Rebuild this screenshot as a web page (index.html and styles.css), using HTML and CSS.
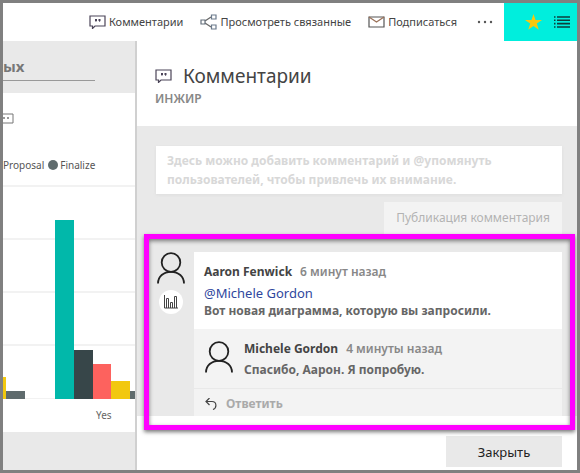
FILE: index.html
```html
<!DOCTYPE html>
<html lang="ru">
<head>
<meta charset="utf-8">
<title>Комментарии</title>
<link rel="stylesheet" href="styles.css">
</head>
<body>
<svg class="sprite" aria-hidden="true">
  <symbol id="speech" viewBox="0 0 17 14">
    <path d="M1 1h15v10H6l-2.500 2.500V11H1z" fill="none" stroke="currentColor" stroke-width="1.200"/>
    <path d="M6 4h2v2L6.500 7V6H6zM9.500 4h2v2L10 7V6h-.5z" fill="currentColor"/>
  </symbol>
  <symbol id="person" viewBox="0 0 28 32">
    <circle cx="14" cy="10.500" r="9.300" fill="none" stroke="currentColor" stroke-width="1.800"/>
    <path d="M1 31.500c0-7 5.500-11.700 13-11.700s13 4.700 13 11.700" fill="none" stroke="currentColor" stroke-width="1.800"/>
  </symbol>
</svg>
<header class="toolbar">
  <button class="tool" type="button"><svg class="speech-icon"><use href="#speech"/></svg>Комментарии</button>
  <button class="tool" type="button">
    <svg class="tool-icon" viewBox="0 0 17 16" fill="none" stroke="#666" stroke-width="1.200"><path d="M5 7l6-4M5 9l6 4"/><path d="M1 6h4v4H1z" stroke="#65707c"/><path d="M11.500 1H16v4h-4.500zM11.500 11H16v4h-4.500z" stroke="#6b7a8c"/></svg>Просмотреть связанные</button>
  <button class="tool" type="button">
    <svg class="tool-icon" viewBox="0 0 17 16" fill="none" stroke="#555" stroke-width="1.200"><path d="M1 3h15v10H1z"/><path d="M1 3l7.500 5L16 3" stroke="#9a7158"/></svg>Подписаться</button>
  <button class="more" type="button" aria-label="Ещё"><svg viewBox="0 0 16 4" fill="#555"><circle cx="2" cy="2" r="1.200"/><circle cx="8" cy="2" r="1.200"/><circle cx="14" cy="2" r="1.200"/></svg></button>
  <div class="quick">
    <button type="button" aria-label="Избранное"><svg class="star" viewBox="0 0 17 16"><path d="M8.500 0l2 6H17l-5.200 3.600 2 6.200-5.300-3.800-5.300 3.800 2-6.200L0 6h6.500z" fill="#f9c80e"/></svg></button>
    <button type="button" aria-label="Список"><svg class="list" viewBox="0 0 16 12" stroke="#0c3f3c" stroke-width="1.600"><path d="M0 1h1.500M3 1h13M0 4.300h1.500M3 4.300h13M0 7.600h1.500M3 7.600h13M0 11h1.500M3 11h13"/></svg></button>
  </div>
</header>
<main class="workspace">
  <section class="report">
    <div class="report-head"><h2>ых</h2></div>
    <div class="tile">
      <svg class="tile-comment" viewBox="0 0 11 12" fill="none" stroke="#777"><path d="M0 1h10v9H0"/><path d="M1 4v2M5 4v2" stroke-width="1.500"/></svg>
      <div class="legend"><span>Proposal</span><i></i><span>Finalize</span></div>
      <svg class="chart" viewBox="0 0 132 216" preserveAspectRatio="xMinYMin slice" role="img" aria-label="Proposal, Finalize: Yes">
        <path d="M0 3h132M0 56h132M0 109h132M0 162h132M0 216h132" stroke="#f2f2f2" stroke-width="2"/>
        <path d="M0 194h3v22H0zM108 198h19v18h-19z" fill="#f2c80f"/>
        <path d="M3 208h19v8H3zM127 208h5v8h-5z" fill="#5f6b6d"/>
        <path d="M52 37h19v179H52z" fill="#01b8aa"/>
        <path d="M71 167h19v49H71z" fill="#374649"/>
        <path d="M90 181h18v35H90z" fill="#fd625e"/>
      </svg>
      <p class="axis">Yes</p>
    </div>
  </section>
  <aside class="panel">
    <header class="panel-head">
      <h1><svg class="speech-icon"><use href="#speech"/></svg>Комментарии</h1>
      <p>ИНЖИР</p>
    </header>
    <div class="panel-body">
      <textarea class="entry" rows="2" aria-label="Комментарий" placeholder="Здесь можно добавить комментарий и @упомянуть пользователей, чтобы привлечь их внимание."></textarea>
      <button class="post" type="button">Публикация комментария</button>
      <article class="thread">
        <div class="thread-side">
          <svg class="avatar"><use href="#person"/></svg>
          <span class="visual"><svg viewBox="0 0 14 14" fill="none" stroke="#444" stroke-width="1"><path d="M.5 0v13H14M2.500 13V3.500h2V13M6.500 13V7.500h2V13M10.500 13V1.500h2V13"/></svg></span>
        </div>
        <div class="card">
          <div class="comment">
            <p><strong>Aaron Fenwick</strong><time>6 минут назад</time></p>
            <p class="mention"><a href="#gordon">@Michele Gordon</a></p>
            <p class="message">Вот новая диаграмма, которую вы запросили.</p>
          </div>
          <div class="reply" id="gordon">
            <svg class="avatar"><use href="#person"/></svg>
            <div>
              <p><strong>Michele Gordon</strong><time>4 минуты назад</time></p>
              <p class="message">Спасибо, Аарон. Я попробую.</p>
            </div>
          </div>
          <button class="respond" type="button"><svg viewBox="0 0 12 12" fill="none" stroke="#444" stroke-width="1.200"><path d="M4.500 0L1 3.500 4.500 7M1 3.500h6c5 0 5 6.500 1 8"/></svg>Ответить</button>
        </div>
      </article>
      <div class="highlight"></div>
    </div>
    <footer class="panel-foot"><button type="button">Закрыть</button></footer>
  </aside>
</main>
</body>
</html>
```
FILE: styles.css
```css
* { box-sizing: border-box; }
html { height: 100%; }
body {
  margin: 0;
  min-height: 100%;
  display: flex;
  flex-direction: column;
  border: 3px solid #808080;
  background: #fff;
  color: #444;
  font: 12px/16px "Noto Sans", "Open Sans", sans-serif;
}
h1, h2, p { margin: 0; }
button { padding: 0; border: 0; background: none; color: inherit; font: inherit; }
svg { display: block; flex: none; }
.sprite { position: absolute; width: 0; height: 0; }

.toolbar { display: flex; justify-content: flex-end; height: 38px; }
.tool { display: flex; align-items: center; gap: 3px; margin-left: 17px; font-size: 11px; white-space: nowrap; }
.tool-icon { width: 17px; height: 16px; }
.speech-icon { width: 17px; height: 14px; color: #4b4458; }
.more { margin: 0 11px 0 20px; }
.more svg { width: 16px; height: 4px; }
.quick { display: flex; align-items: center; gap: 12px; width: 73px; padding-left: 21px; background: #00eedd; }
.star { width: 17px; height: 16px; }
.list { width: 16px; height: 12px; }

.workspace { flex: 1; display: grid; grid-template-columns: minmax(0, 1fr) 442px; }
.report { background: #e9e9e9; overflow: hidden; }
.report-head { height: 52px; padding-top: 15px; }
.report-head h2 { width: 70%; height: 25px; border-bottom: 1px solid #999; font-size: 15px; line-height: 20px; color: #777; }
.tile { height: 339px; padding-top: 20px; background: #fff; }
.tile-comment { width: 11px; height: 12px; }
.legend { display: flex; align-items: center; margin-top: 32px; font-size: 10px; color: #555; }
.legend i { width: 10px; height: 10px; margin: 0 2px 0 4px; border-radius: 50%; background: #5f6b6d; }
.legend span { white-space: nowrap; }
.chart { width: 100%; height: 216px; margin-top: 10px; }
.axis { padding-left: 93px; margin-top: 8px; font-size: 10px; color: #666; }

.panel { display: flex; flex-direction: column; border-left: 2px solid #d0d0d0; }
.panel-head { height: 85px; padding: 21px 18px 0; }
.panel-head h1 { display: flex; align-items: center; gap: 11px; font-size: 19px; line-height: 28px; font-weight: 400; }
.panel-head p { margin-top: 1px; font-size: 12px; font-weight: 600; color: #888; }
.panel-body { position: relative; display: flex; flex-direction: column; padding: 20px 15px 0 19px; background: #e9e9e9; }
.entry {
  height: 48px;
  padding: 5px 11px;
  border: 0;
  resize: none;
  overflow: hidden;
  background: #fff;
  box-shadow: 0 1px 3px #ddd;
  font: 700 12px/19px "Noto Sans", "Open Sans", sans-serif;
}
.entry::placeholder { color: #d8d8d8; opacity: 1; }
.post { align-self: flex-end; height: 32px; margin-top: 8px; padding: 0 12px; background: #f3f3f3; color: #b3b3b3; }
.thread { display: flex; margin-top: 18px; }
.thread-side { width: 38px; padding-left: 1px; }
.avatar { width: 28px; height: 32px; color: #222; }
.visual { display: grid; place-items: center; width: 24px; height: 24px; margin: 6px 0 0 2px; border-radius: 50%; background: #fff; }
.visual svg { width: 14px; height: 14px; }
.card { flex: 1; background: #f3f3f3; font-weight: 600; }
.comment { height: 77px; padding: 12px 10px 0; background: #fff; }
.card strong { font-weight: 700; color: #444; }
.card time { margin-left: 8px; color: #888; }
.mention { margin-top: 5px; font-size: 13px; font-weight: 400; }
.mention a { color: #2f479d; text-decoration: none; }
.message { margin-top: 2px; color: #666; font-weight: 700; }
.reply { display: flex; gap: 11px; height: 60px; padding: 12px 11px 0; border-bottom: 1px solid #e9e9e9; }
.reply .message { margin-top: 5px; }
.respond { display: flex; align-items: center; gap: 9px; height: 27px; padding: 3px 11px 0; color: #aaa; font-weight: 700; }
.respond svg { width: 12px; height: 12px; }
.highlight { position: absolute; inset: 108px 2px -14px 7px; border: 5px solid #f0f; box-shadow: 0 2px 4px #777, inset 0 2px 4px #777; pointer-events: none; }
.panel-foot { display: flex; justify-content: flex-end; padding: 20px 15px 3px; }
.panel-foot button { width: 116px; height: 31px; background: #e9e9e9; color: #222; font-size: 13px; }
```
